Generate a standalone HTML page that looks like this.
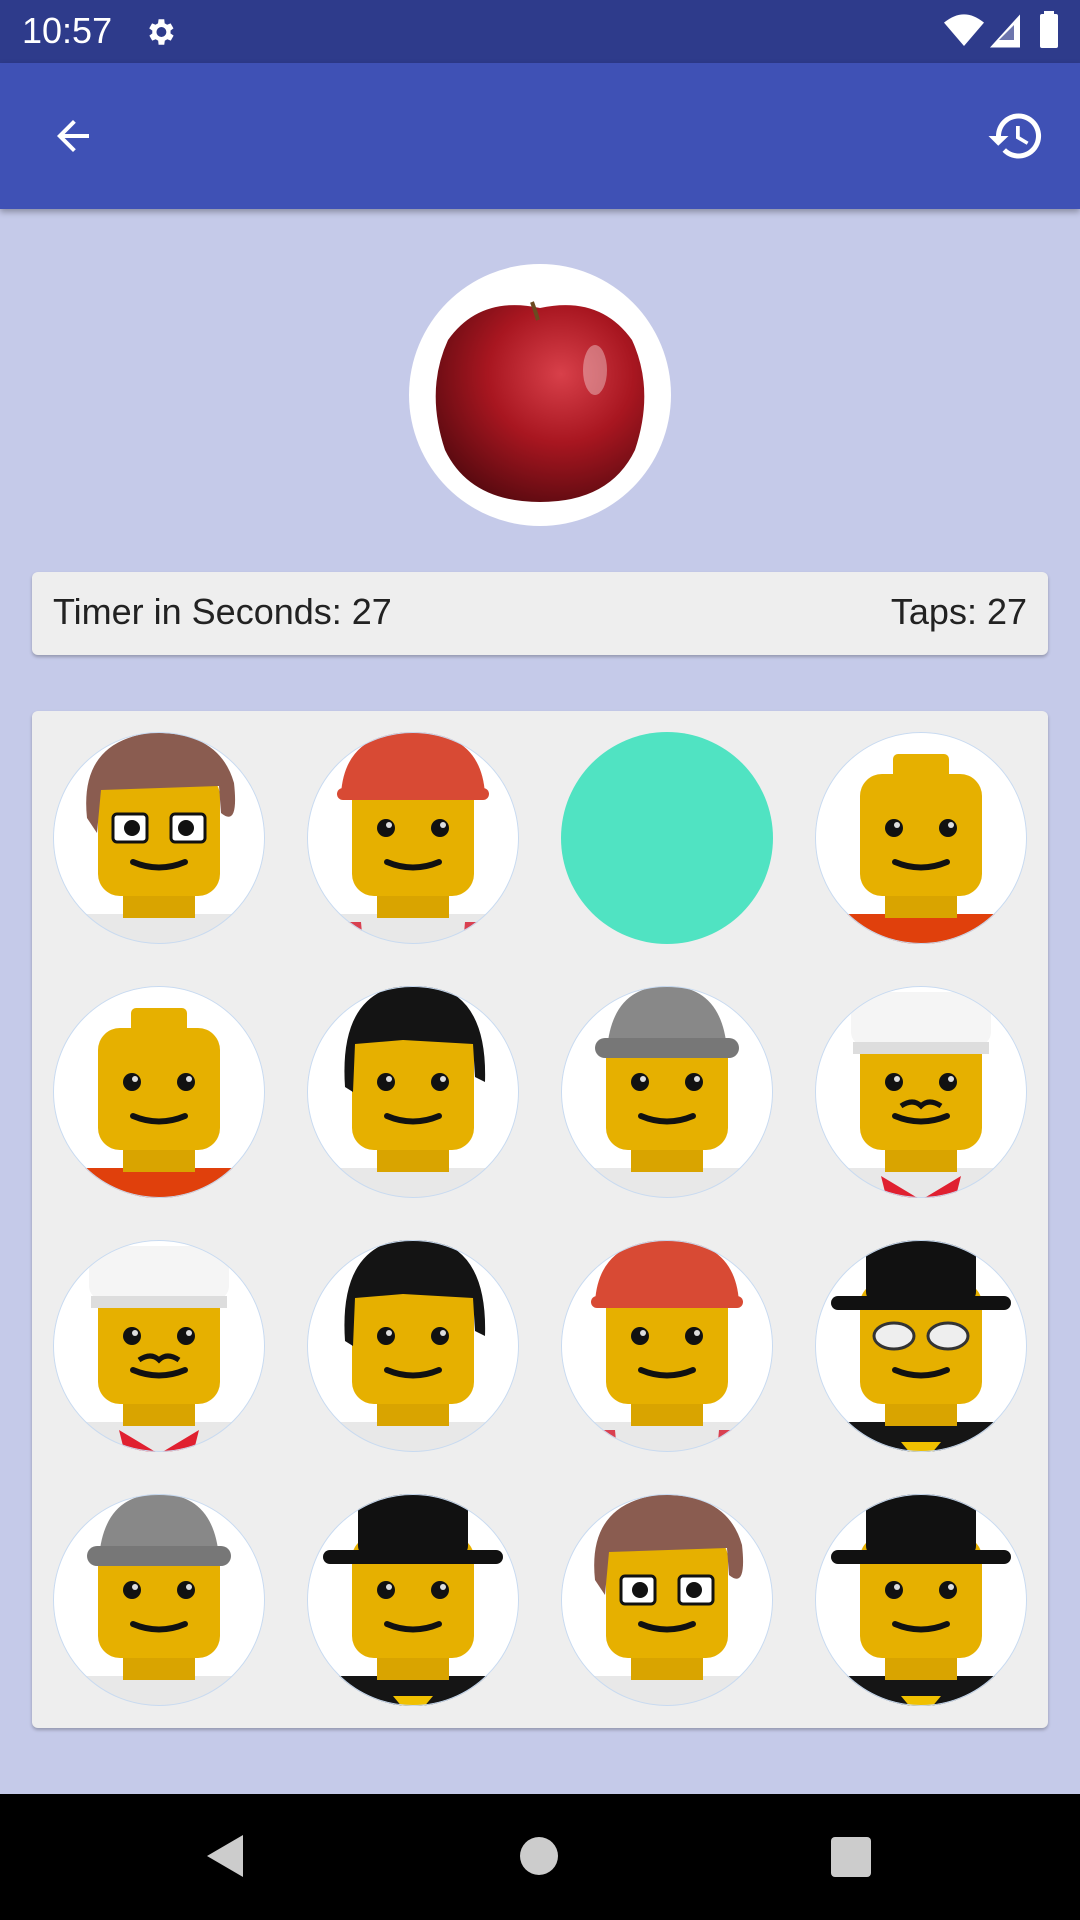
<!DOCTYPE html>
<html><head><meta charset="utf-8"><style>
body{margin:0;width:1080px;height:1920px;background:#c5cae9;font-family:"Liberation Sans",sans-serif;position:relative;overflow:hidden}
.abs{position:absolute}
.sb{left:0;top:0;width:1080px;height:63px;background:#2e3b8b}
.ab{left:0;top:63px;width:1080px;height:146px;background:#3f51b5;box-shadow:0 3px 6px rgba(0,0,0,.3)}
.card{background:#eeeeee;border-radius:6px;box-shadow:0 2px 3px rgba(0,0,0,.25)}
.cell{position:absolute;width:212px;height:212px}
</style></head><body>
<svg width="0" height="0" style="position:absolute"><defs>
<clipPath id="cc"><circle cx="0" cy="0" r="106"/></clipPath>
<g id="head">
<rect x="-36" y="50" width="72" height="30" fill="#d9a400"/>
<rect x="-61" y="-64" width="122" height="122" rx="22" fill="#e6b000"/>
<rect x="-28" y="-84" width="56" height="26" rx="5" fill="#e6b000"/>
<circle cx="-27" cy="-10" r="9" fill="#111"/><circle cx="27" cy="-10" r="9" fill="#111"/>
<circle cx="-24" cy="-13" r="3" fill="#ddd"/><circle cx="30" cy="-13" r="3" fill="#ddd"/>
<path d="M-26 24 Q0 35 26 24" stroke="#111" stroke-width="6" fill="none" stroke-linecap="round"/>
</g>
<g id="white"><rect x="-95" y="76" width="190" height="60" fill="#e8e8e8"/></g>
<g id="orange"><rect x="-95" y="76" width="190" height="60" rx="10" fill="#e0400c"/></g>
<g id="black"><rect x="-95" y="76" width="190" height="60" fill="#151515"/><path d="M-20 96 L0 120 L20 96Z" fill="#f0c000"/></g>
<g id="brown"><path d="M-72 -20 Q-80 -95 -10 -105 Q60 -108 75 -55 Q80 -10 62 -25 L60 -52 L-58 -48 L-62 -5 Z" fill="#8a5c50"/>
<rect x="-46" y="-24" width="34" height="28" rx="4" fill="#fff" stroke="#111" stroke-width="3"/><rect x="12" y="-24" width="34" height="28" rx="4" fill="#fff" stroke="#111" stroke-width="3"/><circle cx="-27" cy="-10" r="8" fill="#111"/><circle cx="27" cy="-10" r="8" fill="#111"/></g>
<g id="red"><path d="M-72 -44 Q-68 -106 0 -106 Q68 -106 72 -44 Z" fill="#d84a34"/><rect x="-76" y="-50" width="152" height="12" rx="6" fill="#d84a34"/></g>
<g id="straps"><path d="M-70 84 L-52 84 L-48 128 L-66 128Z M52 84 L70 84 L66 128 L48 128Z" fill="#d94050"/></g>
<g id="bhair"><path d="M-68 -5 Q-75 -108 5 -108 Q75 -105 72 -10 L62 -15 L60 -48 L-10 -52 L-58 -48 L-60 0 Z" fill="#141414"/></g>
<g id="grey"><path d="M-60 -42 Q-55 -106 0 -106 Q55 -106 60 -42 Z" fill="#888"/><rect x="-72" y="-54" width="144" height="20" rx="10" fill="#777"/></g>
<g id="chef"><rect x="-70" y="-100" width="140" height="54" rx="14" fill="#f5f5f5"/><rect x="-68" y="-50" width="136" height="12" fill="#ddd"/><path d="M-20 14 Q-8 6 0 14 Q8 6 20 14" stroke="#111" stroke-width="5" fill="none"/></g>
<g id="scarf"><path d="M-40 84 L0 108 L40 84 L35 104 L0 122 L-35 104Z" fill="#e02030"/></g>
<g id="tophat"><rect x="-55" y="-106" width="110" height="62" rx="10" fill="#111"/><rect x="-90" y="-50" width="180" height="14" rx="7" fill="#111"/></g>
<g id="glasses"><ellipse cx="-27" cy="-10" rx="20" ry="13" fill="#eee" stroke="#333" stroke-width="3"/><ellipse cx="27" cy="-10" rx="20" ry="13" fill="#eee" stroke="#333" stroke-width="3"/></g>
</defs></svg>

<div class="abs sb"></div>
<div class="abs" style="left:22px;top:10px;color:#fff;font-size:36px">10:57</div>
<svg class="abs" style="left:143px;top:15px" width="34" height="34" viewBox="0 0 24 24"><path fill="#fff" d="M19.4 13a7.5 7.5 0 0 0 0-2l2.1-1.6-2-3.5-2.5 1a7 7 0 0 0-1.7-1L15 3h-4l-.4 2.9a7 7 0 0 0-1.7 1l-2.5-1-2 3.5L6.6 11a7.5 7.5 0 0 0 0 2l-2.1 1.6 2 3.5 2.5-1a7 7 0 0 0 1.7 1L11 21h4l.4-2.9a7 7 0 0 0 1.7-1l2.5 1 2-3.5zM13 15.5a3.5 3.5 0 1 1 0-7 3.5 3.5 0 0 1 0 7z"/></svg>
<svg class="abs" style="left:944px;top:14px" width="40" height="34" viewBox="0 0 24 20"><path fill="#fff" d="M12 19L0 5Q12-5 24 5z"/></svg>
<svg class="abs" style="left:990px;top:14px" width="30" height="34" viewBox="0 0 20 22"><path fill="#fff" d="M20 0v22H0z" opacity=".3"/><path fill="#fff" d="M20 0v22H0zM16 7 6 17h10z"/></svg>
<div class="abs" style="left:1040px;top:14px;width:18px;height:34px;background:#fff;border-radius:2px"></div>
<div class="abs" style="left:1044px;top:11px;width:10px;height:4px;background:#fff"></div>

<div class="abs ab"></div>
<svg class="abs" style="left:49px;top:112px" width="48" height="48" viewBox="0 0 24 24"><path fill="#fff" d="M20 11H7.8l5.6-5.6L12 4l-8 8 8 8 1.4-1.4L7.8 13H20z"/></svg>
<svg class="abs" style="left:986px;top:106px" width="60" height="60" viewBox="0 0 24 24"><path fill="#fff" d="M13 3a9 9 0 0 0-9 9H1l3.9 3.9L9 12H6a7 7 0 1 1 2 4.9l-1.4 1.4A9 9 0 1 0 13 3zm-1 5v5l4.3 2.5.7-1.2-3.5-2.1V8z"/></svg>

<div class="abs" style="left:409px;top:264px;width:262px;height:262px;border-radius:50%;background:#fff"></div>
<svg class="abs" style="left:420px;top:290px" width="240" height="220" viewBox="0 0 240 220">
<defs><radialGradient id="ap" cx="0.6" cy="0.35" r="0.7"><stop offset="0" stop-color="#d8404a"/><stop offset="0.5" stop-color="#a81620"/><stop offset="1" stop-color="#5a0a10"/></radialGradient></defs>
<path d="M120 18 Q180 5 212 50 Q235 100 215 160 Q190 212 120 212 Q50 212 25 160 Q5 100 28 50 Q60 5 120 18Z" fill="url(#ap)"/>
<path d="M118 30 Q115 20 112 12" stroke="#6b4a20" stroke-width="4" fill="none"/>
<ellipse cx="175" cy="80" rx="12" ry="25" fill="#fff" opacity=".35"/>
</svg>

<div class="abs card" style="left:32px;top:572px;width:1016px;height:83px"></div>
<div class="abs" style="left:53px;top:591px;font-size:36px;color:#222">Timer in Seconds: 27</div>
<div class="abs" style="right:53px;top:591px;font-size:36px;color:#222">Taps: 27</div>

<div class="abs card" style="left:32px;top:711px;width:1016px;height:1017px"></div>

<svg class="cell" style="left:53px;top:732px" viewBox="-106 -106 212 212"><g clip-path="url(#cc)"><circle r="106" fill="#fff"/><use href="#white"/><use href="#head"/><use href="#brown"/></g><circle r="105.5" fill="none" stroke="#c8daf0"/></svg>
<svg class="cell" style="left:307px;top:732px" viewBox="-106 -106 212 212"><g clip-path="url(#cc)"><circle r="106" fill="#fff"/><use href="#white"/><use href="#straps"/><use href="#head"/><use href="#red"/></g><circle r="105.5" fill="none" stroke="#c8daf0"/></svg>
<svg class="cell" style="left:561px;top:732px" viewBox="-106 -106 212 212"><circle r="106" fill="#50e3c2"/></svg>
<svg class="cell" style="left:815px;top:732px" viewBox="-106 -106 212 212"><g clip-path="url(#cc)"><circle r="106" fill="#fff"/><use href="#orange"/><use href="#head"/></g><circle r="105.5" fill="none" stroke="#c8daf0"/></svg>

<svg class="cell" style="left:53px;top:986px" viewBox="-106 -106 212 212"><g clip-path="url(#cc)"><circle r="106" fill="#fff"/><use href="#orange"/><use href="#head"/></g><circle r="105.5" fill="none" stroke="#c8daf0"/></svg>
<svg class="cell" style="left:307px;top:986px" viewBox="-106 -106 212 212"><g clip-path="url(#cc)"><circle r="106" fill="#fff"/><use href="#white"/><use href="#head"/><use href="#bhair"/></g><circle r="105.5" fill="none" stroke="#c8daf0"/></svg>
<svg class="cell" style="left:561px;top:986px" viewBox="-106 -106 212 212"><g clip-path="url(#cc)"><circle r="106" fill="#fff"/><use href="#white"/><use href="#head"/><use href="#grey"/></g><circle r="105.5" fill="none" stroke="#c8daf0"/></svg>
<svg class="cell" style="left:815px;top:986px" viewBox="-106 -106 212 212"><g clip-path="url(#cc)"><circle r="106" fill="#fff"/><use href="#white"/><use href="#scarf"/><use href="#head"/><use href="#chef"/></g><circle r="105.5" fill="none" stroke="#c8daf0"/></svg>

<svg class="cell" style="left:53px;top:1240px" viewBox="-106 -106 212 212"><g clip-path="url(#cc)"><circle r="106" fill="#fff"/><use href="#white"/><use href="#scarf"/><use href="#head"/><use href="#chef"/></g><circle r="105.5" fill="none" stroke="#c8daf0"/></svg>
<svg class="cell" style="left:307px;top:1240px" viewBox="-106 -106 212 212"><g clip-path="url(#cc)"><circle r="106" fill="#fff"/><use href="#white"/><use href="#head"/><use href="#bhair"/></g><circle r="105.5" fill="none" stroke="#c8daf0"/></svg>
<svg class="cell" style="left:561px;top:1240px" viewBox="-106 -106 212 212"><g clip-path="url(#cc)"><circle r="106" fill="#fff"/><use href="#white"/><use href="#straps"/><use href="#head"/><use href="#red"/></g><circle r="105.5" fill="none" stroke="#c8daf0"/></svg>
<svg class="cell" style="left:815px;top:1240px" viewBox="-106 -106 212 212"><g clip-path="url(#cc)"><circle r="106" fill="#fff"/><use href="#black"/><use href="#head"/><use href="#glasses"/><use href="#tophat"/></g><circle r="105.5" fill="none" stroke="#c8daf0"/></svg>

<svg class="cell" style="left:53px;top:1494px" viewBox="-106 -106 212 212"><g clip-path="url(#cc)"><circle r="106" fill="#fff"/><use href="#white"/><use href="#head"/><use href="#grey"/></g><circle r="105.5" fill="none" stroke="#c8daf0"/></svg>
<svg class="cell" style="left:307px;top:1494px" viewBox="-106 -106 212 212"><g clip-path="url(#cc)"><circle r="106" fill="#fff"/><use href="#black"/><use href="#head"/><use href="#tophat"/></g><circle r="105.5" fill="none" stroke="#c8daf0"/></svg>
<svg class="cell" style="left:561px;top:1494px" viewBox="-106 -106 212 212"><g clip-path="url(#cc)"><circle r="106" fill="#fff"/><use href="#white"/><use href="#head"/><use href="#brown"/></g><circle r="105.5" fill="none" stroke="#c8daf0"/></svg>
<svg class="cell" style="left:815px;top:1494px" viewBox="-106 -106 212 212"><g clip-path="url(#cc)"><circle r="106" fill="#fff"/><use href="#black"/><use href="#head"/><use href="#tophat"/></g><circle r="105.5" fill="none" stroke="#c8daf0"/></svg>

<div class="abs" style="left:0;top:1794px;width:1080px;height:126px;background:#000"></div>
<svg class="abs" style="left:205px;top:1833px" width="40" height="46" viewBox="0 0 40 46"><path d="M38 2V44L2 23Z" fill="#ccc"/></svg>
<div class="abs" style="left:520px;top:1837px;width:38px;height:38px;border-radius:50%;background:#ccc"></div>
<div class="abs" style="left:831px;top:1837px;width:40px;height:40px;border-radius:4px;background:#ccc"></div>
</body></html>
